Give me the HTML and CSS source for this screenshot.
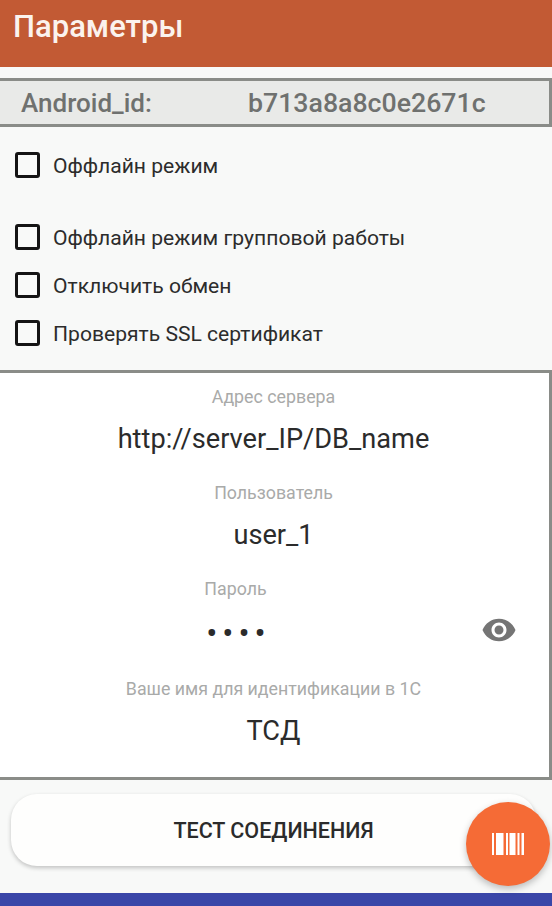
FILE: index.html
```html
<!DOCTYPE html>
<html lang="ru">
<head>
  <meta charset="UTF-8" />
  <meta name="viewport" content="width=device-width, initial-scale=1" />
  <title>Параметры</title>
  <link rel="stylesheet" href="styles.css">
</head>
<body>
  <div class="screen">
    <header class="toolbar">Параметры</header>

    <div class="device-row">
      <span class="device-label">Android_id:</span>
      <span class="device-value">b713a8a8c0e2671c</span>
    </div>

    <div class="options">
      <label class="option option-first"><span class="box"></span>Оффлайн режим</label>
      <label class="option"><span class="box"></span>Оффлайн режим групповой работы</label>
      <label class="option"><span class="box"></span>Отключить обмен</label>
      <label class="option"><span class="box"></span>Проверять SSL сертификат</label>
    </div>

    <section class="panel">
      <div class="field">
        <div class="field-label">Адрес сервера</div>
        <div class="field-value">http://server_IP/DB_name</div>
      </div>
      <div class="field">
        <div class="field-label">Пользователь</div>
        <div class="field-value">user_1</div>
      </div>
      <div class="field field-password">
        <div class="field-label">Пароль</div>
        <div class="field-value dots">••••</div>
        <svg class="eye" viewBox="0 0 24 24" width="36" height="36" aria-hidden="true">
          <path fill="#757575" d="M12 4.5C7 4.5 2.73 7.61 1 12c1.73 4.39 6 7.5 11 7.500s9.27-3.110 11-7.500c-1.730-4.390-6-7.500-11-7.500zM12 17c-2.760 0-5-2.240-5-5s2.240-5 5-5 5 2.240 5 5-2.240 5-5 5zm0-8c-1.660 0-3 1.340-3 3s1.340 3 3 3 3-1.340 3-3-1.340-3-3-3z"/>
        </svg>
      </div>
      <div class="field">
        <div class="field-label">Ваше имя для идентификации в 1С</div>
        <div class="field-value">ТСД</div>
      </div>
    </section>

    <div class="actions">
      <button class="test-btn">ТЕСТ СОЕДИНЕНИЯ</button>
      <button class="fab" aria-label="Штрихкод">
        <svg viewBox="0 0 32 22" width="32" height="22" aria-hidden="true">
          <path fill="#fff" d="M0 0h2v22H0zM4 0h7.500v22H4zM14 0h2v22h-2zM17.500 0h6v22h-6zM25.500 0h2v22h-2zM29.500 0H32v22h-2.500z"/>
        </svg>
      </button>
    </div>

    <div class="bottom-bar"></div>
  </div>
</body>
</html>
```

FILE: styles.css
```css
:root {
  --brick: #c25a34;
  --orange: #f56b36;
  --indigo: #3a46a8;
  --line: #8a8c88;
  --paper: #f8f9f8;
}
* {
  box-sizing: border-box;
}
body {
  margin: 0;
  background: var(--paper);
  font-family: Roboto, sans-serif;
}
.screen {
  position: relative;
  width: 552px;
  height: 906px;
  overflow: hidden;
  display: flex;
  flex-direction: column;
}
.toolbar {
  height: 67px;
  flex: none;
  padding: 9px 0 0 13px;
  background: var(--brick);
  color: #fbf3ee;
  font-size: 31px;
  line-height: 36px;
  font-weight: 500;
}
.device-row {
  flex: none;
  height: 49px;
  margin-top: 11px;
  padding: 1px 0 0 21px;
  display: flex;
  align-items: center;
  background: #e9eae8;
  border: 3px solid var(--line);
  border-left-width: 0;
  color: #6f716f;
  font-size: 26.700px;
  font-weight: 500;
}
.device-label {
  width: 227px;
  flex: none;
  font-size: 26px;
}
.options {
  flex: none;
  height: 243px;
  padding: 14px 0 0 15px;
  display: flex;
  flex-direction: column;
}
.option {
  height: 48px;
  display: flex;
  align-items: center;
  color: #2c2c2c;
  font-size: 21.100px;
}
.option-first {
  margin-bottom: 24px;
}
.box {
  width: 25px;
  height: 26px;
  margin-right: 13px;
  flex: none;
  border: 3px solid #141414;
  border-radius: 3px;
}
.panel {
  flex: none;
  height: 410px;
  padding-top: 12px;
  background: #fff;
  border: 3px solid var(--line);
  border-left-width: 0;
}
.field {
  position: relative;
  height: 96px;
  padding-right: 2px;
  text-align: center;
}
.field-label {
  height: 24px;
  color: #a9aaa9;
  font-size: 17.800px;
  line-height: 24px;
}
.field-value {
  margin-top: 12px;
  color: #2b2b2b;
  font-size: 27.200px;
  line-height: 36px;
}
.field-password {
  height: 100px;
  padding-right: 78px;
}
.dots {
  margin-top: 15px;
  padding-left: 6px;
  letter-spacing: 5px;
  font-size: 33px;
}
.eye {
  position: absolute;
  right: 32px;
  top: 35px;
}
.actions {
  flex: none;
  height: 113px;
  padding: 14px 16px 0 11px;
}
.test-btn {
  width: 100%;
  height: 72px;
  border: none;
  border-radius: 26px;
  background: #fefefd;
  box-shadow: 0 2px 4px rgba(0,0,0,0.22);
  color: #2b2b2b;
  font-family: inherit;
  font-size: 21.500px;
  font-weight: 500;
}
.fab {
  position: absolute;
  left: 466px;
  top: 802px;
  width: 84px;
  height: 84px;
  padding: 0;
  display: flex;
  align-items: center;
  justify-content: center;
  border: none;
  border-radius: 50%;
  background: var(--orange);
  box-shadow: 0 3px 7px rgba(0,0,0,0.25);
}
.bottom-bar {
  flex: 1;
  background: var(--indigo);
}
```
